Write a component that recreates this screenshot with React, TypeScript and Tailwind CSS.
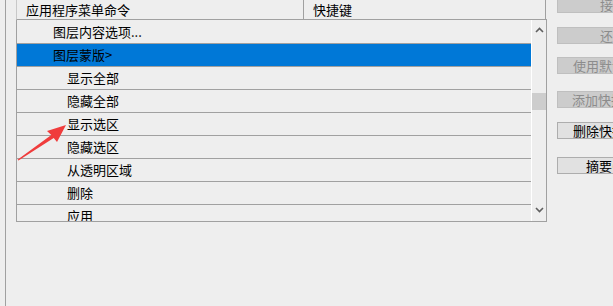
import { clsx } from "clsx";

type Row = { label: string; level: 1 | 2; selected?: boolean };

const rows: Row[] = [
  { label: "图层内容选项...", level: 1 },
  { label: "图层蒙版>", level: 1, selected: true },
  { label: "显示全部", level: 2 },
  { label: "隐藏全部", level: 2 },
  { label: "显示选区", level: 2 },
  { label: "隐藏选区", level: 2 },
  { label: "从透明区域", level: 2 },
  { label: "删除", level: 2 },
  { label: "应用", level: 2 },
];

type Btn = { label: string; disabled?: boolean; cls: string };

const buttons: Btn[] = [
  { label: "接受(A)", disabled: true, cls: "mt-[-4px] pl-[42px]" },
  { label: "还原(U)", disabled: true, cls: "mt-[14px] pl-[42px]" },
  { label: "使用默认值(D)", disabled: true, cls: "mt-[13px] pl-[15px]" },
  { label: "添加快捷键(S)", disabled: true, cls: "mt-[17px] pl-[14px]" },
  { label: "删除快捷键(E)", cls: "mt-[14px] pl-[15px]" },
  { label: "摘要(M)...", cls: "mt-[18px] pl-[28px]" },
];

export default function App() {
  return (
    <div
      className="relative flex w-[613px] h-[306px] overflow-hidden bg-[#eeeeee] text-[13px] text-black"
      style={{ fontFamily: '"Noto Sans CJK SC", "Noto Sans", sans-serif' }}
    >
      {/* left edge of the outer group box */}
      <div className="w-[6px] h-full shrink-0 border-r border-[#a0a0a0]" />

      {/* command table */}
      <div className="ml-[10px] w-[531px] shrink-0 flex flex-col">
        <div className="flex h-[20px] border-b border-[#a0a0a0] border-l border-l-[#c8c8c8]">
          <div className="w-[287px] border-r border-[#a0a0a0] pl-[9px] leading-[19px]">
            应用程序菜单命令
          </div>
          <div className="w-[242px] border-r border-[#a0a0a0] pl-[9px] leading-[19px]">
            快捷键
          </div>
        </div>

        <div className="flex h-[202px] border-l border-r border-b border-[#a0a0a0] overflow-hidden">
          <div className="flex-1 pt-px">
            {rows.map((r) => (
              <div
                key={r.label}
                className={clsx(
                  "h-[23px] border-b border-[#a0a0a0] flex items-center whitespace-nowrap",
                  r.selected ? "bg-[#0078d7]" : "bg-[#eeeeee]",
                  r.level === 1 ? "pl-[36px]" : "pl-[50px]"
                )}
              >
                {r.label}
              </div>
            ))}
          </div>

          {/* scrollbar */}
          <div className="w-[15px] shrink-0 flex flex-col border-l border-white bg-[#eeeeee]">
            <div className="h-[20px] flex items-center justify-center">
              <svg width="9" height="6" viewBox="0 0 9 6">
                <polyline points="1,5 4.5,1.5 8,5" fill="none" stroke="#606060" strokeWidth="1.6" />
              </svg>
            </div>
            <div className="h-[53px]" />
            <div className="h-[17px] bg-[#cdcdcd]" />
            <div className="flex-1" />
            <div className="h-[22px] flex items-center justify-center">
              <svg width="9" height="6" viewBox="0 0 9 6">
                <polyline points="1,1 4.5,4.5 8,1" fill="none" stroke="#606060" strokeWidth="1.6" />
              </svg>
            </div>
          </div>
        </div>
      </div>

      {/* buttons */}
      <div className="ml-[10px] flex flex-col">
        {buttons.map((b) => (
          <div
            key={b.label}
            className={clsx(
              "w-[110px] h-[17px] shrink-0 border whitespace-nowrap leading-[15px]",
              b.cls,
              b.disabled
                ? "bg-[#cccccc] border-[#bfbfbf] text-[#8c8c8c]"
                : "bg-[#e1e1e1] border-[#adadad] text-black"
            )}
          >
            {b.label}
          </div>
        ))}
      </div>

      {/* red annotation arrow */}
      <svg className="absolute left-0 top-0 pointer-events-none" width="613" height="306">
        <polygon
          points="66,125 47,131 51.3,134.9 17.5,159.8 18.5,160.6 53.7,138.1 57,142"
          fill="#f03c3c"
        />
      </svg>
    </div>
  );
}
